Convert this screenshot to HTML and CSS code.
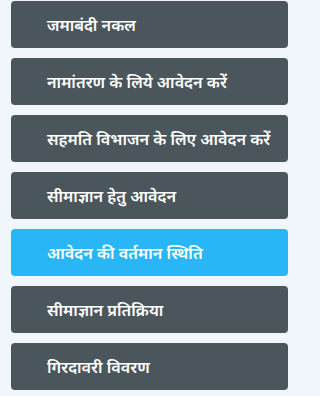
FILE: index.html
```html
<!DOCTYPE html>
<html lang="hi">
<head>
<meta charset="utf-8">
<link rel="stylesheet" href="styles.css">
</head>
<body>
<div class="menu">
  <a class="item">जमाबंदी नकल</a>
  <a class="item">नामांतरण के लिये आवेदन करें</a>
  <a class="item">सहमति विभाजन के लिए आवेदन करें</a>
  <a class="item">सीमाज्ञान हेतु आवेदन</a>
  <a class="item active">आवेदन की वर्तमान स्थिति</a>
  <a class="item">सीमाज्ञान प्रतिक्रिया</a>
  <a class="item">गिरदावरी विवरण</a>
</div>
</body>
</html>
```
FILE: styles.css
```css
html, body {
  margin: 0;
  padding: 0;
  background: #f0f6fc;
}
body {
  font-family: "Noto Sans", "Noto Sans Devanagari", sans-serif;
}
.menu {
  display: flex;
  flex-direction: column;
  gap: 10px;
  width: 299px;
  box-sizing: border-box;
  padding: 1px 11px 0 11px;
}
.item {
  display: flex;
  align-items: center;
  height: 47px;
  box-sizing: border-box;
  padding-left: 36px;
  background: #4b565c;
  color: #ffffff;
  border-radius: 4px;
  font-size: 16.2px;
  font-weight: 600;
  text-decoration: none;
}
.item.active {
  background: #29b6f6;
}
```
